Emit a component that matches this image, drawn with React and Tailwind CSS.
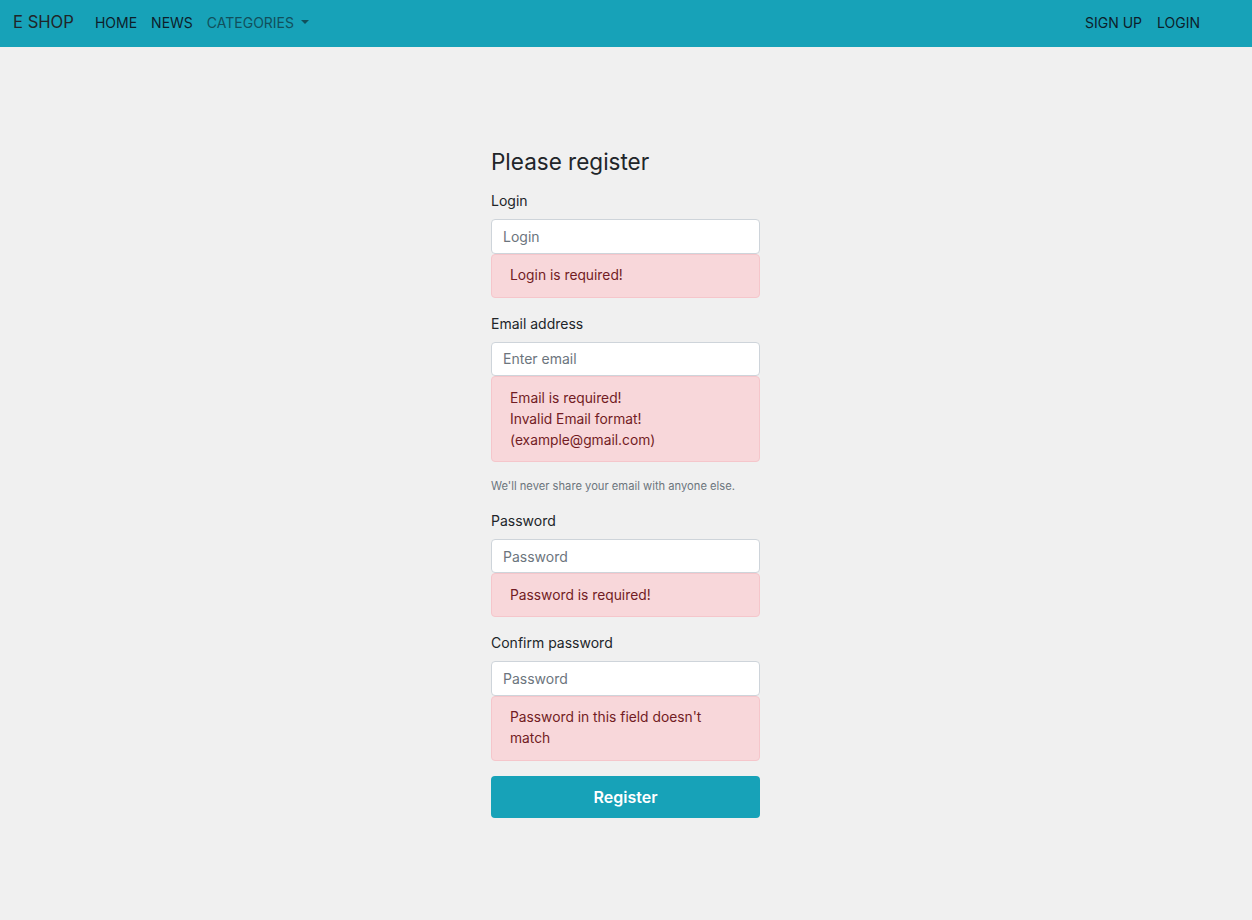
import React from 'react';

const fields = [
  { label: 'Login', placeholder: 'Login', type: 'text', errors: ['Login is required!'] },
  {
    label: 'Email address',
    placeholder: 'Enter email',
    type: 'email',
    errors: ['Email is required!', 'Invalid Email format!', '(example@gmail.com)'],
    help: "We'll never share your email with anyone else.",
  },
  { label: 'Password', placeholder: 'Password', type: 'password', errors: ['Password is required!'] },
  {
    label: 'Confirm password',
    placeholder: 'Password',
    type: 'password',
    errors: ["Password in this field doesn't match"],
  },
];

const Navbar = () => (
  <nav className="flex h-[47px] items-center bg-[#17a2b8] pb-[3px] pl-[13px] pr-[52px]">
    <span className="mr-[21px] text-[16.6px] text-[#212529]">E SHOP</span>
    <div className="flex items-center gap-[14px] text-[14px]">
      <span className="text-[#0d1e2b]">HOME</span>
      <span className="text-[#0d1e2b]">NEWS</span>
      <span className="flex items-center text-[#11505c]">
        CATEGORIES
        <span className="ml-[7px] inline-block h-0 w-0 border-x-[4px] border-t-[4.5px] border-x-transparent border-t-[#11505c]" />
      </span>
    </div>
    <div className="ml-auto flex items-center gap-[15px] text-[14px] text-[#0d1e2b]">
      <span>SIGN UP</span>
      <span>LOGIN</span>
    </div>
  </nav>
);

const Field = ({ label, placeholder, type, errors, help }) => (
  <div className="mb-[15px]">
    <label className="mb-[8px] block text-[14px] leading-[21px] text-[#212529]">{label}</label>
    <input
      type={type}
      placeholder={placeholder}
      className="block h-[34.5px] w-full rounded-[4px] border border-[#ced4da] bg-white px-[11px] text-[14px] text-[#495057] placeholder:text-[#6c757d] outline-none"
    />
    <div className="rounded-[4px] border border-[#f5c6cb] bg-[#f8d7da] py-[10.5px] pl-[18px] pr-[14px] text-[13.8px] leading-[21px] text-[#721c24]">
      {errors.map((e) => (
        <div key={e}>{e}</div>
      ))}
    </div>
    {help && <small className="mt-[16px] block text-[11.2px] leading-[16.8px] text-[#6c757d]">{help}</small>}
  </div>
);

export default function App() {
  return (
    <div className="min-h-[920px] bg-[#f0f0f0] font-['Inter','Liberation_Sans',sans-serif]">
      <Navbar />
      <div className="flex justify-center pt-[100px] pr-[1px]">
        <form className="w-[269px]" onSubmit={(e) => e.preventDefault()}>
          <h4 className="mb-[14px] text-[22.5px] leading-[29px] text-[#212529]">Please register</h4>
          {fields.map((f) => (
            <Field key={f.label} {...f} />
          ))}
          <button
            type="submit"
            className="h-[42px] w-full rounded-[4px] bg-[#17a2b8] text-[16px] font-semibold text-white"
          >
            Register
          </button>
        </form>
      </div>
    </div>
  );
}
